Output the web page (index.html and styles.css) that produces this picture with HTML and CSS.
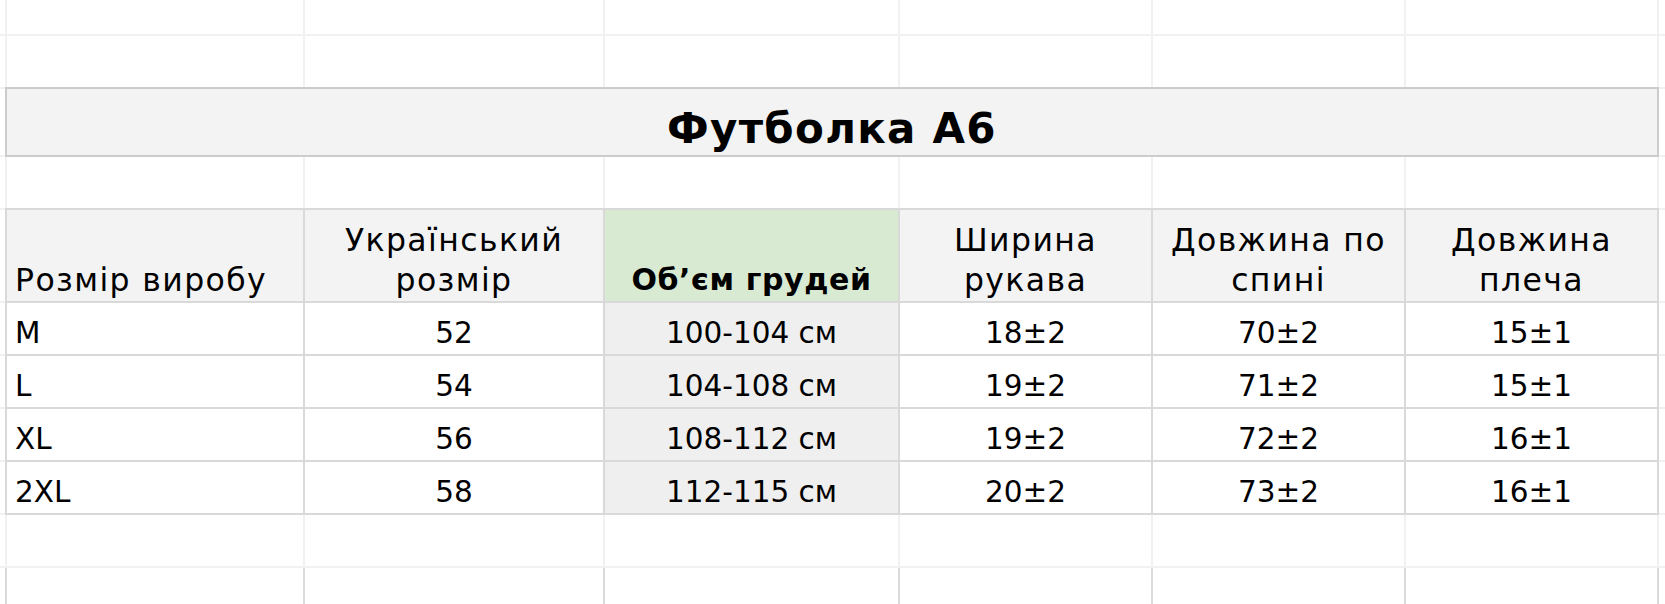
FILE: index.html
```html
<!DOCTYPE html>
<html lang="uk">
<head>
<meta charset="utf-8">
<title>Футболка А6</title>
<link rel="stylesheet" href="styles.css">
</head>
<body>
<div class="sheet">
  <div class="c"></div><div class="c"></div><div class="c"></div><div class="c"></div><div class="c"></div><div class="c"></div><div class="c"></div><div class="c"></div>
  <div class="c"></div><div class="c"></div><div class="c"></div><div class="c"></div><div class="c"></div><div class="c"></div><div class="c"></div><div class="c"></div>

  <div class="c"></div>
  <div class="title">Футболка А6</div>
  <div class="c"></div>

  <div class="c"></div><div class="c"></div><div class="c"></div><div class="c"></div><div class="c"></div><div class="c"></div><div class="c"></div><div class="c"></div>

  <div class="c"></div>
  <div class="table">
    <div class="hd left">Розмір виробу</div>
    <div class="hd">Український<br>розмір</div>
    <div class="hd green">Об’єм грудей</div>
    <div class="hd">Ширина<br>рукава</div>
    <div class="hd">Довжина по<br>спині</div>
    <div class="hd">Довжина<br>плеча</div>

    <div class="td left">M</div><div class="td">52</div><div class="td grey">100-104 см</div><div class="td">18±2</div><div class="td">70±2</div><div class="td">15±1</div>
    <div class="td left">L</div><div class="td">54</div><div class="td grey">104-108 см</div><div class="td">19±2</div><div class="td">71±2</div><div class="td">15±1</div>
    <div class="td left">XL</div><div class="td">56</div><div class="td grey">108-112 см</div><div class="td">19±2</div><div class="td">72±2</div><div class="td">16±1</div>
    <div class="td left">2XL</div><div class="td">58</div><div class="td grey">112-115 см</div><div class="td">20±2</div><div class="td">73±2</div><div class="td">16±1</div>
  </div>
  <div class="c"></div>
  <div class="c"></div><div class="c"></div>
  <div class="c"></div><div class="c"></div>
  <div class="c"></div><div class="c"></div>
  <div class="c"></div><div class="c"></div>

  <div class="c"></div><div class="c"></div><div class="c"></div><div class="c"></div><div class="c"></div><div class="c"></div><div class="c"></div><div class="c"></div>
  <div class="c last"></div><div class="c last"></div><div class="c last"></div><div class="c last"></div><div class="c last"></div><div class="c last"></div><div class="c last"></div><div class="c last"></div>
</div>
</body>
</html>
```

FILE: styles.css
```css
html, body {
  margin: 0;
  padding: 0;
  background: #ffffff;
  overflow: hidden;
}

.sheet {
  display: grid;
  grid-template-columns: 5px 296px 298px 293px 251px 251px 251px 1fr;
  grid-template-rows: 34px 51px 66px 51px 91px 51px 51px 51px 51px 51px 36px;
  gap: 2px;
  background: #f1f1f1;
  width: 1665px;
  height: 604px;
  font-family: "DejaVu Sans", "Noto Sans", sans-serif;
  color: #000;
}

.c {
  background: #ffffff;
}

.c.last {
  box-shadow: -2px 0 0 #dadada;
}

.title {
  grid-column: 2 / 8;
  background: #f3f3f3;
  outline: 2px solid #cccccc;
  display: flex;
  align-items: flex-end;
  justify-content: center;
  font-weight: bold;
  font-size: 42px;
  line-height: 50px;
  letter-spacing: 1.3px;
  padding-bottom: 1px;
}

.table {
  grid-column: 2 / 8;
  grid-row: 5 / 10;
  display: grid;
  grid-template-columns: 296px 298px 293px 251px 251px 251px;
  grid-template-rows: 91px 51px 51px 51px 51px;
  gap: 2px;
  background: #d9d9d9;
  outline: 2px solid #d9d9d9;
}

.hd, .td {
  display: flex;
  flex-direction: column;
  justify-content: flex-end;
  align-items: center;
  text-align: center;
  padding: 0 8px 1px;
  line-height: 40px;
  white-space: nowrap;
}

.hd {
  background: #f3f3f3;
  font-size: 31.5px;
  letter-spacing: 1.4px;
  padding-bottom: 1.5px;
}

.td {
  background: #ffffff;
  font-size: 29.5px;
}

.left {
  align-items: flex-start;
  text-align: left;
}

.green {
  background: #d9ead3;
  font-weight: bold;
  font-size: 30px;
  letter-spacing: 0.6px;
}

.grey {
  background: #efefef;
}
```
